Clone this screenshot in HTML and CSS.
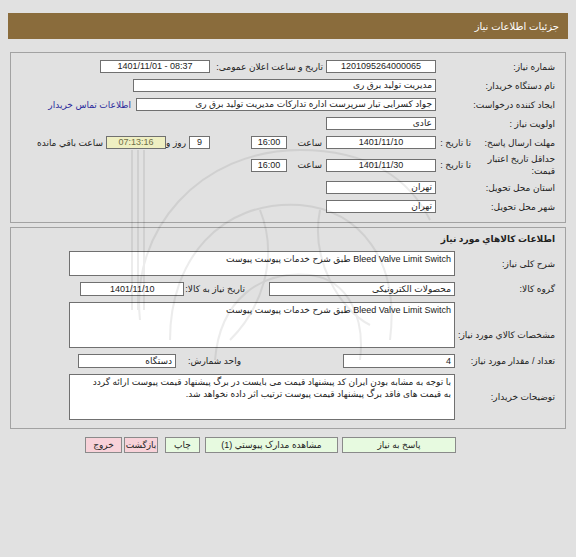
FILE: index.html
```html
<!DOCTYPE html>
<html lang="fa">
<head>
<meta charset="utf-8">
<title>جزئیات اطلاعات نیاز</title>
<link rel="stylesheet" href="styles.css">
</head>
<body>
<div class="page" dir="rtl">
  <div class="titlebar">جزئیات اطلاعات نیاز</div>

  <div class="box box1">
    <div class="row">
      <div class="lbl">شماره نیاز:</div>
      <div class="fld c w110">1201095264000065</div>
      <div class="lbl-mid">تاریخ و ساعت اعلان عمومی:</div>
      <div class="fld c w110 ltr">1401/11/01 - 08:37</div>
    </div>
    <div class="row">
      <div class="lbl">نام دستگاه خریدار:</div>
      <div class="fld w303">مدیریت تولید برق ری</div>
    </div>
    <div class="row">
      <div class="lbl">ایجاد کننده درخواست:</div>
      <div class="fld w300">جواد کسرایی تبار سرپرست اداره تدارکات مدیریت تولید برق ری</div>
      <a class="link" href="#">اطلاعات تماس خریدار</a>
    </div>
    <div class="row">
      <div class="lbl">اولویت نیاز :</div>
      <div class="fld w110">عادی</div>
    </div>
    <div class="row">
      <div class="lbl split"><span class="main">مهلت ارسال پاسخ:</span><span class="sub">تا تاریخ :</span></div>
      <div class="fld c w110">1401/11/10</div>
      <div class="hour">ساعت</div>
      <div class="fld c w36">16:00</div>
      <div class="fld c w21 days">9</div>
      <div class="unit">روز و</div>
      <div class="fld c w60 remain">07:13:16</div>
      <div class="rem-lbl">ساعت باقي مانده</div>
    </div>
    <div class="row tall">
      <div class="lbl split"><span class="main two">حداقل تاریخ اعتبار<br>قیمت:</span><span class="sub">تا تاریخ :</span></div>
      <div class="fld c w110">1401/11/30</div>
      <div class="hour">ساعت</div>
      <div class="fld c w36">16:00</div>
    </div>
    <div class="row">
      <div class="lbl">استان محل تحویل:</div>
      <div class="fld w110">تهران</div>
    </div>
    <div class="row">
      <div class="lbl">شهر محل تحویل:</div>
      <div class="fld w110">تهران</div>
    </div>
  </div>

  <div class="box box2">
    <div class="sectitle">اطلاعات کالاهاي مورد نياز</div>
    <div class="row2 first">
      <div class="lbl2">شرح کلی نیاز:</div>
      <div class="ta h25">Bleed Valve Limit Switch طبق شرح خدمات پیوست پیوست</div>
    </div>
    <div class="row2">
      <div class="lbl2">گروه کالا:</div>
      <div class="fld w186">محصولات الکترونیکی</div>
      <div class="lbl-need">تاریخ نیاز به کالا:</div>
      <div class="fld c w104">1401/11/10</div>
    </div>
    <div class="row2">
      <div class="lbl2 low">مشخصات کالاي مورد نياز:</div>
      <div class="ta h46">Bleed Valve Limit Switch طبق شرح خدمات پیوست پیوست</div>
    </div>
    <div class="row2">
      <div class="lbl2">تعداد / مقدار مورد نیاز:</div>
      <div class="fld w112">4</div>
      <div class="lbl-unit">واحد شمارش:</div>
      <div class="fld w98">دستگاه</div>
    </div>
    <div class="row2">
      <div class="lbl2">توضیحات خریدار:</div>
      <div class="ta h46 notes">با توجه به مشابه بودن ایران کد پیشنهاد قیمت می بایست در برگ پیشنهاد قیمت پیوست ارائه گردد<br>به قیمت های فاقد برگ پیشنهاد قیمت پیوست ترتیب اثر داده نخواهد شد.</div>
    </div>
  </div>

  <div class="btns">
    <div class="btn green b-reply">پاسخ به نیاز</div>
    <div class="btn green b-docs">مشاهده مدارک پیوستي (1)</div>
    <div class="btn green b-print">چاپ</div>
    <div class="btn pink b-back">بازگشت</div>
    <div class="btn pink b-exit">خروج</div>
  </div>
</div>

<div class="watermark" aria-hidden="true">
  <svg class="wm-logo" width="340" height="300" viewBox="0 0 340 300">
    <g fill="none" stroke="#000" stroke-width="2">
      <path d="M30 210 C 20 120, 90 40, 190 40 C 260 40, 300 70, 320 110"/>
      <path d="M60 230 C 60 150, 110 90, 190 95 C 250 100, 290 150, 280 230"/>
      <path d="M105 250 C 110 190, 150 160, 200 165 C 240 170, 255 210, 250 250"/>
      <path d="M22 40 L22 200 M28 40 L28 200 M34 40 L34 200"/>
      <path d="M150 100 C 170 150, 150 200, 120 230"/>
      <path d="M210 100 C 200 150, 230 200, 260 215"/>
    </g>
  </svg>
</div>
</body>
</html>
```

FILE: styles.css
```css
* { box-sizing: border-box; }

body {
  margin: 0;
  background: #e1e1e1;
  font-family: "Liberation Sans", "DejaVu Sans", sans-serif;
  font-size: 9px;
  color: #222;
  position: relative;
  min-height: 557px;
}

.page {
  direction: rtl;
  padding: 13px 8px 0;
}

.titlebar {
  height: 26px;
  background: #8a6c3c;
  color: #fff;
  font-size: 10px;
  line-height: 27px;
  padding-right: 9px;
}

.box {
  margin: 0 2px;
  border: 1px solid #a2a2a2;
  padding: 4px 10px 6px;
}

.box1 { margin-top: 13px; }

.row {
  display: flex;
  align-items: center;
  height: 19px;
}

.row.tall { height: 26px; }

.lbl {
  width: 119px;
  flex: none;
  white-space: nowrap;
}

.lbl.split { display: flex; align-items: center; }
.lbl .main { width: 84px; flex: none; }
.lbl .main.two { line-height: 12px; }
.lbl .sub { flex: none; }

.fld {
  flex: none;
  height: 13px;
  border: 1px solid #707070;
  background: #fff;
  line-height: 11px;
  padding: 0 3px;
  white-space: nowrap;
  overflow: hidden;
}

.c { text-align: center; }
.ltr { direction: ltr; }

.w110 { width: 110px; }
.w303 { width: 303px; }
.w300 { width: 300px; }
.w36 { width: 36px; }
.w21 { width: 21px; }
.w60 { width: 60px; }
.w186 { width: 186px; }
.w104 { width: 104px; }
.w112 { width: 112px; }
.w98 { width: 98px; }

.lbl-mid {
  width: 116px;
  flex: none;
  padding-right: 3px;
  white-space: nowrap;
}

.link {
  margin-right: 5px;
  color: #2b2b9c;
  text-decoration: none;
  white-space: nowrap;
}

.hour {
  width: 39px;
  flex: none;
  padding-right: 4px;
}

.days { margin-right: 41px; }

.unit {
  width: 23px;
  flex: none;
  padding-right: 3px;
  white-space: nowrap;
}

.remain {
  background: #efefc2;
  color: #6e6e48;
}

.rem-lbl {
  margin-right: 3px;
  white-space: nowrap;
}

.box2 {
  margin-top: 4px;
  padding: 4px 10px 8px;
}

.sectitle {
  font-weight: bold;
  line-height: 14px;
  height: 19px;
}

.row2 {
  display: flex;
  align-items: center;
  margin-top: 6px;
}

.row2.first { margin-top: 0; }

.box2 .fld { height: 14px; line-height: 12px; }

.lbl2 {
  width: 100px;
  flex: none;
  white-space: nowrap;
}

.lbl2.low { padding-top: 20px; }

.ta {
  width: 386px;
  flex: none;
  border: 1px solid #707070;
  background: #fff;
  padding: 1px 3px;
  line-height: 12px;
  white-space: nowrap;
  overflow: hidden;
}

.h25 { height: 25px; }
.h46 { height: 46px; }

.lbl-need {
  flex: none;
  margin-right: 24px;
  margin-left: 1px;
  white-space: nowrap;
}

.lbl-unit {
  width: 167px;
  flex: none;
  padding-right: 102px;
  white-space: nowrap;
}

.btns {
  display: flex;
  margin-top: 8px;
  padding-right: 112px;
}

.btn {
  flex: none;
  height: 16px;
  border: 1px solid #8a8a8a;
  line-height: 14px;
  text-align: center;
  white-space: nowrap;
}

.green { background: #e7fae0; }
.pink { background: #f8d2d9; }

.b-reply { width: 114px; }
.b-docs { width: 133px; margin-right: 4px; }
.b-print { width: 35px; margin-right: 5px; }
.b-back { width: 34px; margin-right: 7px; }
.b-exit { width: 37px; margin-right: 2px; }

/* faint watermark logo laid over the form */
.watermark {
  position: absolute;
  inset: 0;
  pointer-events: none;
  overflow: hidden;
}

.wm-logo {
  position: absolute;
  left: 110px;
  top: 110px;
  opacity: 0.07;
}
```
